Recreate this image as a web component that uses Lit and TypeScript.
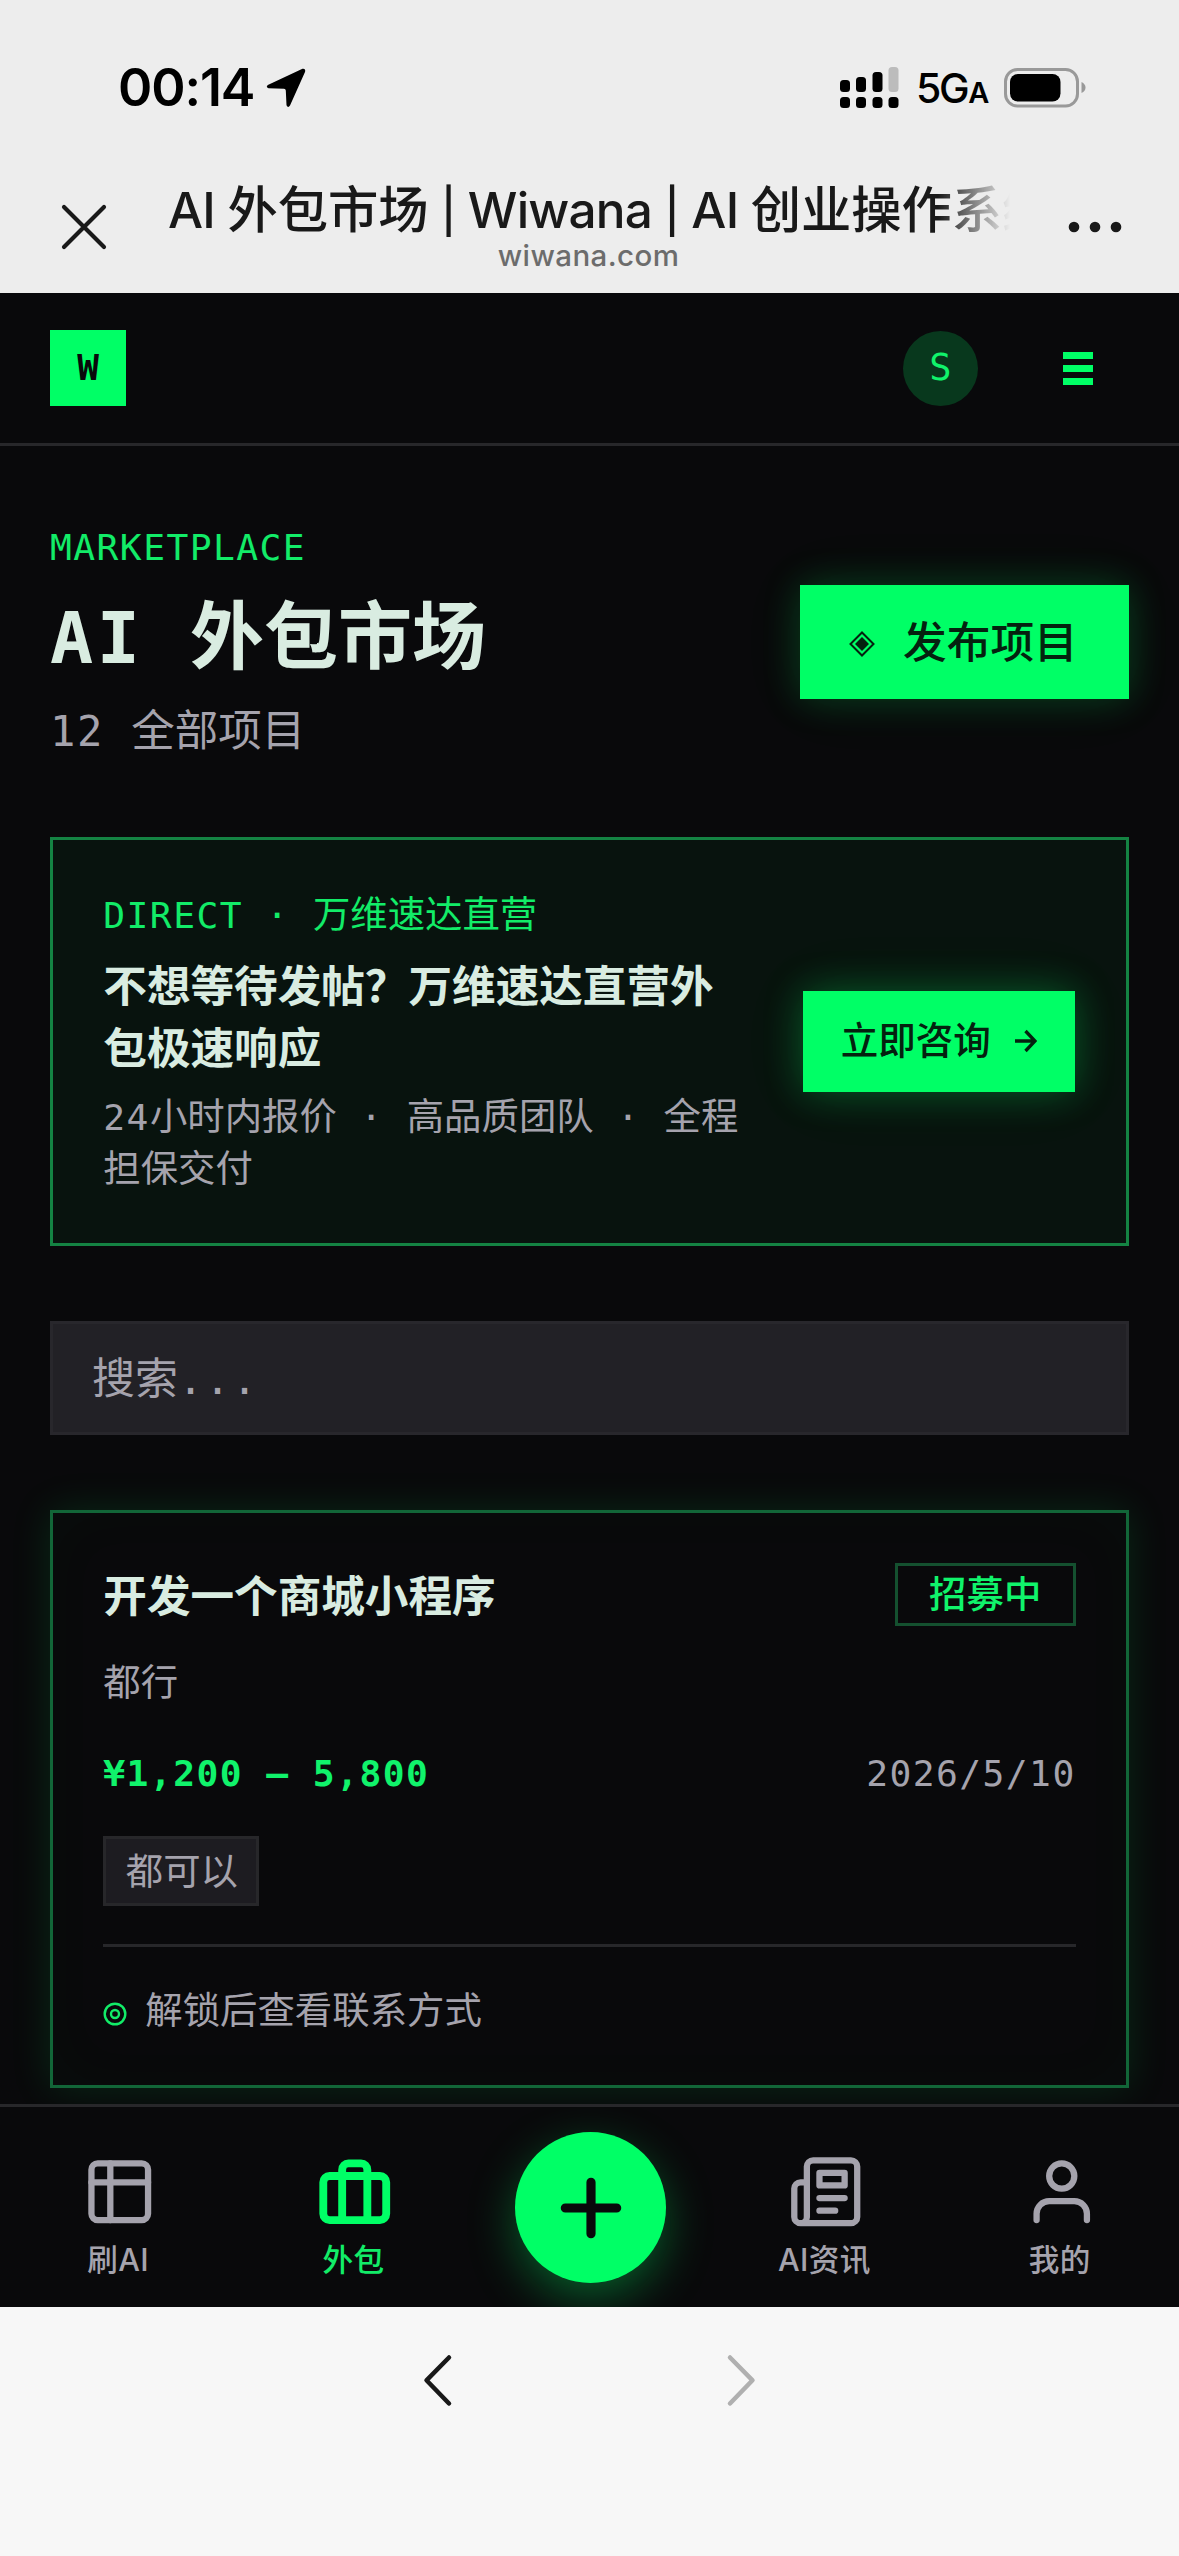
import { LitElement, html, css, svg } from "lit";
import { customElement, property } from "lit/decorators.js";
import { classMap } from "lit/directives/class-map.js";

const icons = {
  board: svg`<rect x="3" y="3" width="18" height="18" rx="2"/><path d="M3 9h18M9 3v18"/>`,
  briefcase: svg`<rect x="2" y="7" width="20" height="14" rx="2"/><path d="M16 21V5a2 2 0 0 0-2-2h-4a2 2 0 0 0-2 2v16"/>`,
  news: svg`<path d="M4 22h16a2 2 0 0 0 2-2V4a2 2 0 0 0-2-2H8a2 2 0 0 0-2 2v16a2 2 0 0 1-2 2Zm0 0a2 2 0 0 1-2-2v-9c0-1.1.9-2 2-2h2"/><path d="M18 14h-8M15 18h-5M10 6h8v4h-8V6Z"/>`,
  user: svg`<path d="M20 21v-2a4 4 0 0 0-4-4H8a4 4 0 0 0-4 4v2"/><circle cx="12" cy="7" r="4"/>`,
};

@customElement("phone-status")
export class PhoneStatus extends LitElement {
  static styles = css`
    :host { display: block; height: 293px; background: #ededed; color: #000; font-family: Inter, "Noto Sans CJK SC", sans-serif; }
    .status { display: flex; align-items: center; height: 64px; padding: 56px 93px 0 118px; }
    .time { font-size: 52px; font-weight: 600; line-height: 64px; letter-spacing: -1.1px; width: 148px; white-space: nowrap; }
    .grow { flex: 1; }
    .net { font-size: 41px; font-weight: 500; line-height: 64px; letter-spacing: -2.4px; margin: 4px 0 0 17px; width: 88px; white-space: nowrap; }
    .net small { font-size: 29px; font-weight: 600; letter-spacing: 0; margin-left: 1px; }
    svg { display: block; flex: none; }
    .bar { display: flex; align-items: flex-start; padding: 56px 57px 0 60px; }
    .close { margin-top: 27px; }
    .mid { margin-left: 60px; width: 850px; display: flex; flex-direction: column; }
    .title { font-size: 50.3px; font-weight: 500; line-height: 67px; color: #191919; white-space: nowrap; overflow: hidden;
      -webkit-mask-image: linear-gradient(90deg, #000 770px, transparent 842px); mask-image: linear-gradient(90deg, #000 770px, transparent 842px); }
    .latin { font-size: 49.5px; letter-spacing: -0.8px; white-space: pre; }
    .pipe { font-size: 44px; vertical-align: 1px; }
    .host { font-size: 29.500px; font-weight: 450; line-height: 36px; color: #6c6c6c; letter-spacing: 0.400px; text-align: center; margin: -8px 9px 0 0; }
    .more { margin: 45px 0 0 auto; }
  `;
  render() {
    return html`
      <div class="status">
        <span class="time">00:14</span>
        <svg width="40" height="40" viewBox="0 0 40 40"><path d="M36.5 .8Q40 .2 39 4L24 37.500Q22 40.500 20.500 37.200L19.800 22.500Q19.600 20.800 18 20.800L2.500 20.300Q-.5 19.500 1.800 17Z"/></svg>
        <span class="grow"></span>
        <svg width="59" height="42" viewBox="0 0 59 42">
          <rect x="0" y="30" width="10" height="11" rx="3.500"/><rect x="16" y="30" width="10" height="11" rx="3.500"/><rect x="32.500" y="30" width="10" height="11" rx="3.500"/><rect x="48.500" y="30" width="10" height="11" rx="3.500"/>
          <rect x="0" y="13" width="10" height="12" rx="3.500"/><rect x="16" y="10" width="10" height="15" rx="3.500"/><rect x="32.500" y="5" width="10" height="20" rx="3.500"/><rect x="48.500" y="0" width="10" height="25" rx="3.500" fill="#bcbcbc"/>
        </svg>
        <span class="net">5G<small>A</small></span>
        <svg width="82" height="40" viewBox="0 0 82 40"><rect x="1.500" y="1.500" width="72" height="36.500" rx="12" fill="none" stroke="#999" stroke-width="3"/><rect x="6" y="6" width="50.500" height="27.500" rx="8"/><path d="M77.500 14q4 2 4 5.500t-4 5.500Z" fill="#999"/></svg>
      </div>
      <div class="bar">
        <svg class="close" width="48" height="48" viewBox="0 0 48 48" stroke="#191919" stroke-width="4.200" stroke-linecap="round"><path d="M4 4 44 44M44 4 4 44"/></svg>
        <div class="mid">
          <div class="title"><span class="latin">AI </span>外包市场<span class="latin"> <span class="pipe">|</span> Wiwana <span class="pipe">|</span> AI </span>创业操作系统</div>
          <div class="host">wiwana.com</div>
        </div>
        <svg class="more" width="54" height="12" viewBox="0 0 54 12" fill="#191919"><circle cx="6" cy="6" r="5.300"/><circle cx="27" cy="6" r="5.300"/><circle cx="48" cy="6" r="5.300"/></svg>
      </div>`;
  }
}

@customElement("tab-item")
export class TabItem extends LitElement {
  @property() icon: keyof typeof icons = "board";
  @property() label = "";
  @property({ type: Boolean }) active = false;
  static styles = css`
    :host { flex: 1; display: block; }
    .item { display: flex; flex-direction: column; align-items: center; color: #a5a3ad; padding-top: 47px; }
    .item.active { color: #00ff66; }
    svg { display: block; fill: none; stroke: currentColor; stroke-linecap: round; stroke-linejoin: round; }
    .label { font: 450 30.600px/42px Inter, "Noto Sans CJK SC", sans-serif; letter-spacing: 0.400px; margin: 9px 3px 0 0; }
    .active .label { color: #12ec68; }
  `;
  render() {
    return html`<div class=${classMap({ item: true, active: this.active })}>
      <svg width="75.500" height="75.500" viewBox="0 0 24 24" stroke-width=${this.active ? 2.5 : 2}>${icons[this.icon]}</svg>
      <span class="label">${this.label}</span>
    </div>`;
  }
}

@customElement("app-root")
export class AppRoot extends LitElement {
  static styles = css`
    :host { display: block; width: 1179px; height: 2556px; overflow: hidden; background: #09090b; color: #a5a3ad;
      font-family: "DejaVu Sans Mono", "Noto Sans CJK SC", monospace; font-size: 37.400px; line-height: 50.300px; }
    .screen { display: flex; flex-direction: column; height: 2556px; }
    .m { font-size: 0.970em; letter-spacing: 0.040em; white-space: pre; }
    svg { display: block; flex: none; }
    .header { display: flex; align-items: center; box-sizing: border-box; height: 153px; padding: 0 86px 0 50px; border-bottom: 3px solid #27272a; }
    .logo { width: 76px; height: 76px; display: grid; place-items: center; background: #00ff66; color: #09090b; font-weight: 700; font-size: 36px; }
    .avatar { width: 75px; height: 75px; border-radius: 50%; margin: 0 85px 0 auto; display: grid; place-items: center; background: #08381d; color: #10f36b; font-size: 37px; }
    .main { box-sizing: border-box; height: 1658px; padding: 75.500px 50px 0; overflow: hidden; display: flex; flex-direction: column; gap: 75.500px; }
    .hero { display: flex; align-items: center; justify-content: space-between; height: 239.500px; }
    .heading { padding-top: 3px; }
    .eyebrow { color: #12ec68; white-space: nowrap; }
    .h1 { margin: 23px 0 21px; font-size: 74px; line-height: 82px; font-weight: 700; color: #d9ece1; white-space: nowrap; }
    .h1 .m { letter-spacing: 0.048em; }
    .count { font-size: 43.500px; line-height: 63px; white-space: nowrap; }
    .btn { display: flex; align-items: center; box-sizing: border-box; flex: none; background: #00ff66; color: #04210f; font-weight: 500; box-shadow: 0 0 38px rgba(0, 255, 102, 0.200), 0 0 70px rgba(0, 255, 102, 0.060); white-space: nowrap; }
    .publish { width: 329px; height: 114px; padding-left: 50px; gap: 28px; font-size: 43.700px; margin-top: 1px; }
    .publish svg { margin: 5px 0 0 -1px; }
    .publish span { padding-top: 2px; }
    .direct { display: flex; align-items: center; justify-content: space-between; box-sizing: border-box; height: 409px; padding: 2px 51px 0 50.300px; border: 3px solid #148343; background: #08130e; }
    .direct .title { font-size: 43.600px; line-height: 62.900px; font-weight: 700; color: #d9ece1; margin: 14.200px 0 11px; white-space: nowrap; }
    .desc { white-space: nowrap; }
    .consult { width: 272px; height: 101px; padding-left: 37.700px; gap: 24px; margin-top: -2px; font-size: 37.500px; box-shadow: 0 0 38px rgba(0, 255, 102, 0.270), 0 0 70px rgba(0, 255, 102, 0.070); }
    .search { flex: none; box-sizing: border-box; height: 113.500px; padding: 24px 39px 0; border: 3px solid #28272c; background: #222126; font-size: 43px; line-height: 63px; }
    .search .m { letter-spacing: 0.045em; }
    .card { flex: none; box-sizing: border-box; height: 578px; padding: 50.300px; border: 3px solid #126638; background: #09090b;
      box-shadow: 0 0 38px rgba(0, 255, 102, 0.130), inset 0 0 63px rgba(0, 255, 102, 0.025); display: flex; flex-direction: column; }
    .row { display: flex; align-items: center; justify-content: space-between; }
    .card .title { font-size: 43.600px; line-height: 62.900px; font-weight: 700; color: #d9ece1; padding-top: 3px; margin-bottom: -3px; }
    .badge { box-sizing: border-box; width: 181px; height: 63px; display: grid; place-items: center; border: 3px solid #14502f; color: #10f36b; font-weight: 500; }
    .note { margin-top: 31.500px; }
    .pay { margin-top: 40px; }
    .price { color: #10f36b; font-weight: 700; }
    .tag { align-self: flex-start; box-sizing: border-box; width: 156px; height: 70px; margin-top: 37px; padding: 8px 19.500px 6px; border: 3px solid #27272a; background: #1d1c21; white-space: nowrap; }
    .locked { display: flex; align-items: center; gap: 18px; margin-top: 37.700px; padding-top: 38.500px; border-top: 3px solid #27272a; }
    .locked svg { margin-top: 6px; }
    .tabs { display: flex; box-sizing: border-box; height: 203px; padding-left: 2px; border-top: 3px solid #27272a; background: #09090b; overflow: hidden; }
    .slot { flex: 1; display: flex; justify-content: center; }
    .plus { width: 151px; height: 151px; margin-top: 25px; border-radius: 50%; background: #00ff66; display: grid; place-items: center; box-shadow: 0 16px 50px -4px rgba(0, 255, 102, 0.380); }
    .toolbar { flex: 1; display: flex; align-items: flex-start; gap: 272px; padding: 46px 0 0 422px; background: #f7f7f7; }
  `;
  render() {
    return html`<div class="screen">
      <phone-status></phone-status>
      <div class="header">
        <div class="logo">W</div>
        <div class="avatar">S</div>
        <svg width="30" height="33" viewBox="0 0 30 33" fill="#00ff66"><path d="M0 0h30v7H0zM0 13h30v7H0zM0 26h30v7H0z"/></svg>
      </div>
      <div class="main">
        <div class="hero">
          <div class="heading">
            <div class="eyebrow"><span class="m">MARKETPLACE</span></div>
            <div class="h1"><span class="m">AI </span>外包市场</div>
            <div class="count"><span class="m">12 </span>全部项目</div>
          </div>
          <div class="btn publish">
            <svg width="26" height="26" viewBox="0 0 26 26"><path d="M13 1.500 24.500 13 13 24.500 1.500 13Z" fill="none" stroke="#04210f" stroke-width="2"/><path d="M13 6 20 13 13 20 6 13Z" fill="#04210f"/></svg>
            <span>发布项目</span>
          </div>
        </div>
        <div class="direct">
          <div>
            <div class="eyebrow"><span class="m">DIRECT · </span>万维速达直营</div>
            <div class="title">不想等待发帖？万维速达直营外<br>包极速响应</div>
            <div class="desc"><span class="m">24</span>小时内报价<span class="m"> · </span>高品质团队<span class="m"> · </span>全程<br>担保交付</div>
          </div>
          <div class="btn consult">
            <span>立即咨询</span>
            <svg width="22" height="24" viewBox="0 0 22 24" fill="none" stroke="#04210f" stroke-width="3.300"><path d="M0 12h20M10.500 2l9.500 10-9.500 10"/></svg>
          </div>
        </div>
        <div class="search">搜索<span class="m">...</span></div>
        <div class="card">
          <div class="row"><div class="title">开发一个商城小程序</div><div class="badge">招募中</div></div>
          <div class="note">都行</div>
          <div class="row pay"><span class="price"><span class="m">¥1,200 – 5,800</span></span><span class="m">2026/5/10</span></div>
          <div class="tag">都可以</div>
          <div class="locked">
            <svg width="24" height="24" viewBox="0 0 24 24" fill="none" stroke="#12ec68" stroke-width="2.400"><circle cx="12" cy="12" r="10.300"/><circle cx="12" cy="12" r="4"/></svg>
            <span>解锁后查看联系方式</span>
          </div>
        </div>
      </div>
      <div class="tabs">
        <tab-item icon="board" label="刷AI"></tab-item>
        <tab-item icon="briefcase" label="外包" active></tab-item>
        <div class="slot"><div class="plus"><svg width="88" height="88" viewBox="0 0 24 24" stroke="#09090b" stroke-width="2.500" stroke-linecap="round"><path d="M12 5v14M5 12h14"/></svg></div></div>
        <tab-item icon="news" label="AI资讯"></tab-item>
        <tab-item icon="user" label="我的"></tab-item>
      </div>
      <div class="toolbar">
        <svg width="32" height="54" viewBox="0 0 32 54" fill="none" stroke="#191919" stroke-width="4.500" stroke-linecap="round" stroke-linejoin="round"><path d="M27 4.500 4.500 27.300 27 50.500"/></svg>
        <svg width="32" height="54" viewBox="0 0 32 54" fill="none" stroke="#b0b0b0" stroke-width="4.500" stroke-linecap="round" stroke-linejoin="round"><path d="M4 4.500 26.500 27.300 4 50.500"/></svg>
      </div>
    </div>`;
  }
}
